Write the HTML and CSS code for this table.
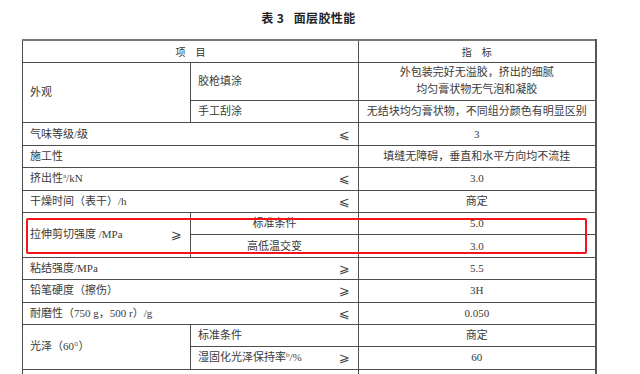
FILE: index.html
```html
<!DOCTYPE html>
<html lang="zh">
<head>
<meta charset="utf-8">
<title>表3 面层胶性能</title>
<link rel="stylesheet" href="styles.css">
</head>
<body>
<h1 class="title">表&nbsp;3&nbsp;&nbsp;&nbsp;面层胶性能</h1>
<table class="spec">
  <colgroup>
    <col class="c1">
    <col class="c2">
    <col class="c3">
  </colgroup>
  <tr class="head">
    <th colspan="2">项&emsp;目</th>
    <th>指&emsp;标</th>
  </tr>
  <tr class="tall">
    <td rowspan="2">外观</td>
    <td>胶枪填涂</td>
    <td class="val two">外包装完好无溢胶，挤出的细腻<br>均匀膏状物无气泡和凝胶</td>
  </tr>
  <tr>
    <td>手工刮涂</td>
    <td class="val">无结块均匀膏状物，不同组分颜色有明显区别</td>
  </tr>
  <tr>
    <td colspan="2"><div class="row-sign"><span>气味等级/级</span><span class="sign">⩽</span></div></td>
    <td class="val">3</td>
  </tr>
  <tr>
    <td colspan="2">施工性</td>
    <td class="val">填缝无障碍，垂直和水平方向均不流挂</td>
  </tr>
  <tr>
    <td colspan="2"><div class="row-sign"><span>挤出性<sup>a</sup>/kN</span><span class="sign">⩽</span></div></td>
    <td class="val">3.0</td>
  </tr>
  <tr>
    <td colspan="2"><div class="row-sign"><span>干燥时间（表干）/h</span><span class="sign">⩽</span></div></td>
    <td class="val">商定</td>
  </tr>
  <tr>
    <td rowspan="2" class="marked"><div class="row-sign"><span>拉伸剪切强度 /MPa</span><span class="sign">⩾</span></div><div class="highlight"></div></td>
    <td class="val">标准条件</td>
    <td class="val">5.0</td>
  </tr>
  <tr>
    <td class="val">高低温交变</td>
    <td class="val">3.0</td>
  </tr>
  <tr>
    <td colspan="2"><div class="row-sign"><span>粘结强度/MPa</span><span class="sign">⩾</span></div></td>
    <td class="val">5.5</td>
  </tr>
  <tr>
    <td colspan="2"><div class="row-sign"><span>铅笔硬度（擦伤）</span><span class="sign">⩾</span></div></td>
    <td class="val">3H</td>
  </tr>
  <tr>
    <td colspan="2"><div class="row-sign"><span>耐磨性（750 g，500 r）/g</span><span class="sign">⩽</span></div></td>
    <td class="val">0.050</td>
  </tr>
  <tr>
    <td rowspan="2">光泽（60°）</td>
    <td>标准条件</td>
    <td class="val">商定</td>
  </tr>
  <tr>
    <td><div class="row-sign"><span>湿固化光泽保持率<sup>b</sup>/%</span><span class="sign">⩾</span></div></td>
    <td class="val">60</td>
  </tr>
  <tr>
    <td colspan="2"></td>
    <td class="val"></td>
  </tr>
</table>
</body>
</html>
```

FILE: styles.css
```css
html, body {
  margin: 0;
  padding: 0;
  background: #ffffff;
  overflow: hidden;
}

body {
  width: 640px;
  height: 374px;
  font-family: "Liberation Serif", "Noto Sans CJK SC", serif;
  color: #3a3a3a;
}

.title {
  margin: 10px 0 0 22px;
  width: 573px;
  height: 16px;
  font-family: "Noto Sans CJK SC", sans-serif;
  font-size: 12px;
  line-height: 16px;
  font-weight: 700;
  letter-spacing: 0.4px;
  text-align: center;
  color: #222;
}

.spec {
  margin: 13px 0 0 22px;
  width: 573px;
  border-collapse: collapse;
  table-layout: fixed;
  font-size: 11px;
  border-top: 2px solid #777;
  border-right: 2px solid #555;
}

.c1 { width: 168px; }
.c2 { width: 168px; }
.c3 { width: 237px; }

.spec th,
.spec td {
  border: 1px solid #4d4d4d;
  padding: 0 7px;
  height: 21.4px;
  vertical-align: middle;
  text-align: left;
  font-weight: 400;
  line-height: 13px;
  white-space: nowrap;
}

.spec .head th {
  height: 20.5px;
  text-align: center;
  font-family: "Noto Sans CJK SC", sans-serif;
  font-size: 10px;
  color: #333;
}

.spec .tall td {
  height: 37.5px;
}

.spec td.val {
  text-align: center;
  padding: 0;
}

.spec td.two {
  line-height: 17.6px;
}

.row-sign {
  display: flex;
  justify-content: space-between;
  align-items: center;
  height: 13px;
}

.sign {
  font-family: "DejaVu Sans", sans-serif;
  font-size: 13px;
  line-height: 13px;
  padding-right: 1px;
  color: #444;
}

sup {
  font-size: 7px;
  line-height: 0;
  vertical-align: 4px;
}

.marked {
  position: relative;
}

.highlight {
  position: absolute;
  left: 3px;
  top: 5px;
  width: 557px;
  height: 32.5px;
  border: 2px solid #f2141a;
  border-radius: 2px;
  pointer-events: none;
}
```
